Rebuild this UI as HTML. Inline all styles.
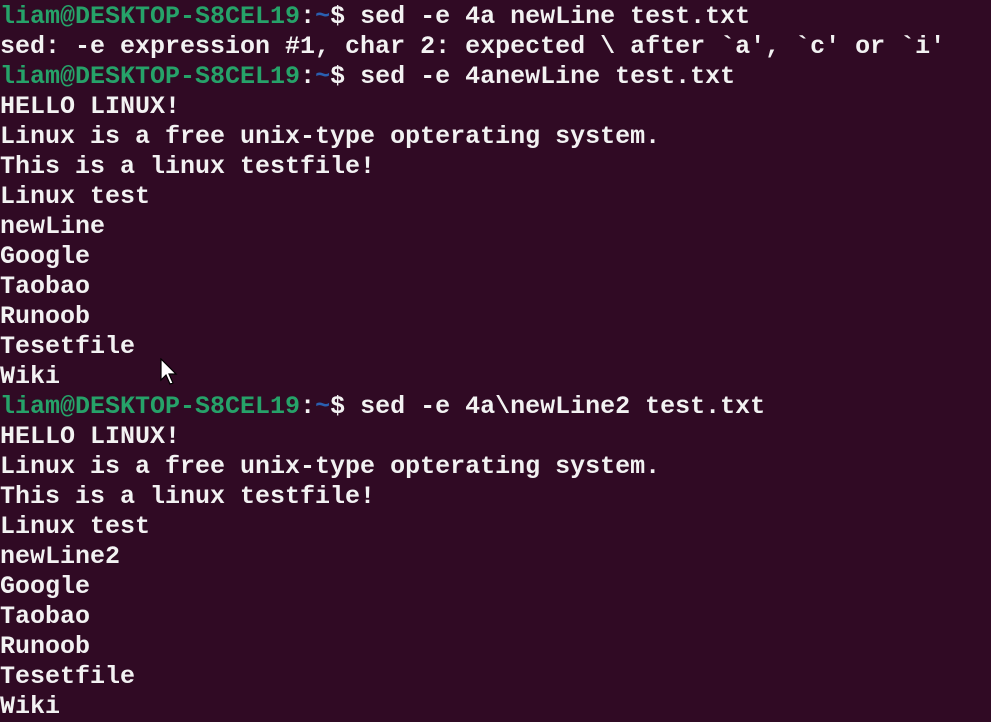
<!DOCTYPE html>
<html><head><meta charset="utf-8"><style>
html,body{margin:0;padding:0;background:#300a24;width:991px;height:721px;overflow:hidden}
pre{margin:0;padding:0;font-family:"Liberation Mono","DejaVu Sans Mono",monospace;font-size:25px;line-height:30px;color:#f2f2f2;font-weight:bold;position:absolute;top:2px;left:0}
.g{color:#26a269}.b{color:#2a5fb0}
</style></head><body>
<pre><span class="g">liam@DESKTOP-S8CEL19</span>:<span class="b">~</span>$ sed -e 4a newLine test.txt
sed: -e expression #1, char 2: expected \ after `a', `c' or `i'
<span class="g">liam@DESKTOP-S8CEL19</span>:<span class="b">~</span>$ sed -e 4anewLine test.txt
HELLO LINUX!
Linux is a free unix-type opterating system.
This is a linux testfile!
Linux test
newLine
Google
Taobao
Runoob
Tesetfile
Wiki
<span class="g">liam@DESKTOP-S8CEL19</span>:<span class="b">~</span>$ sed -e 4a\newLine2 test.txt
HELLO LINUX!
Linux is a free unix-type opterating system.
This is a linux testfile!
Linux test
newLine2
Google
Taobao
Runoob
Tesetfile
Wiki</pre>
<svg style="position:absolute;left:160px;top:358px" width="20" height="28" viewBox="0 0 20 28"><path d="M1 1 L1 22 L6 17 L10 26 L13 25 L9 16 L16 16 Z" fill="#fff" stroke="#000" stroke-width="1.2"/></svg>
</body></html>
